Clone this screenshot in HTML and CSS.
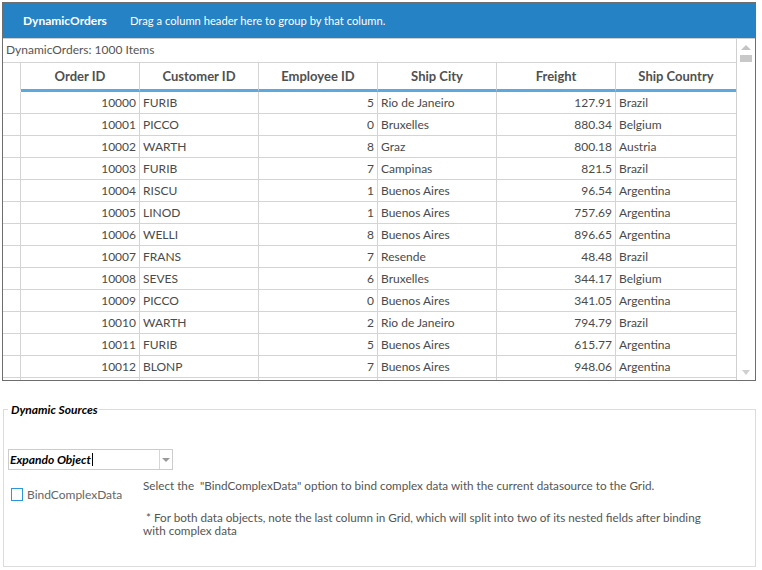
FILE: index.html
```html
<!DOCTYPE html>
<html>
<head>
<meta charset="utf-8">
<link rel="stylesheet" href="styles.css">
</head>
<body>
<div class="grid">
  <div class="group-bar">
    <span class="title">DynamicOrders</span>
    <span class="hint">Drag a column header here to group by that column.</span>
  </div>
  <div class="grid-body">
    <div class="main">
      <div class="caption">DynamicOrders: 1000 Items</div>
      <div class="row head">
        <div class="cell indent"></div>
        <div class="cell">Order ID</div>
        <div class="cell">Customer ID</div>
        <div class="cell">Employee ID</div>
        <div class="cell">Ship City</div>
        <div class="cell">Freight</div>
        <div class="cell last">Ship Country</div>
      </div>
      <div class="row"><div class="cell indent"></div><div class="cell num">10000</div><div class="cell">FURIB</div><div class="cell num">5</div><div class="cell">Rio de Janeiro</div><div class="cell num">127.91</div><div class="cell last">Brazil</div></div>
      <div class="row"><div class="cell indent"></div><div class="cell num">10001</div><div class="cell">PICCO</div><div class="cell num">0</div><div class="cell">Bruxelles</div><div class="cell num">880.34</div><div class="cell last">Belgium</div></div>
      <div class="row"><div class="cell indent"></div><div class="cell num">10002</div><div class="cell">WARTH</div><div class="cell num">8</div><div class="cell">Graz</div><div class="cell num">800.18</div><div class="cell last">Austria</div></div>
      <div class="row"><div class="cell indent"></div><div class="cell num">10003</div><div class="cell">FURIB</div><div class="cell num">7</div><div class="cell">Campinas</div><div class="cell num">821.5</div><div class="cell last">Brazil</div></div>
      <div class="row"><div class="cell indent"></div><div class="cell num">10004</div><div class="cell">RISCU</div><div class="cell num">1</div><div class="cell">Buenos Aires</div><div class="cell num">96.54</div><div class="cell last">Argentina</div></div>
      <div class="row"><div class="cell indent"></div><div class="cell num">10005</div><div class="cell">LINOD</div><div class="cell num">1</div><div class="cell">Buenos Aires</div><div class="cell num">757.69</div><div class="cell last">Argentina</div></div>
      <div class="row"><div class="cell indent"></div><div class="cell num">10006</div><div class="cell">WELLI</div><div class="cell num">8</div><div class="cell">Buenos Aires</div><div class="cell num">896.65</div><div class="cell last">Argentina</div></div>
      <div class="row"><div class="cell indent"></div><div class="cell num">10007</div><div class="cell">FRANS</div><div class="cell num">7</div><div class="cell">Resende</div><div class="cell num">48.48</div><div class="cell last">Brazil</div></div>
      <div class="row"><div class="cell indent"></div><div class="cell num">10008</div><div class="cell">SEVES</div><div class="cell num">6</div><div class="cell">Bruxelles</div><div class="cell num">344.17</div><div class="cell last">Belgium</div></div>
      <div class="row"><div class="cell indent"></div><div class="cell num">10009</div><div class="cell">PICCO</div><div class="cell num">0</div><div class="cell">Buenos Aires</div><div class="cell num">341.05</div><div class="cell last">Argentina</div></div>
      <div class="row"><div class="cell indent"></div><div class="cell num">10010</div><div class="cell">WARTH</div><div class="cell num">2</div><div class="cell">Rio de Janeiro</div><div class="cell num">794.79</div><div class="cell last">Brazil</div></div>
      <div class="row"><div class="cell indent"></div><div class="cell num">10011</div><div class="cell">FURIB</div><div class="cell num">5</div><div class="cell">Buenos Aires</div><div class="cell num">615.77</div><div class="cell last">Argentina</div></div>
      <div class="row"><div class="cell indent"></div><div class="cell num">10012</div><div class="cell">BLONP</div><div class="cell num">7</div><div class="cell">Buenos Aires</div><div class="cell num">948.06</div><div class="cell last">Argentina</div></div>
      <div class="row"><div class="cell indent"></div><div class="cell"></div><div class="cell"></div><div class="cell"></div><div class="cell"></div><div class="cell"></div><div class="cell last"></div></div>
    </div>
    <div class="vscroll">
      <span class="arrow up"></span>
      <span class="thumb"></span>
      <span class="spacer"></span>
      <span class="arrow down"></span>
    </div>
  </div>
</div>

<fieldset class="sources">
  <legend>Dynamic Sources</legend>
  <div class="combo">
    <span class="combo-text">Expando Object<span class="caret"></span></span>
    <span class="combo-btn"><span class="combo-arrow"></span></span>
  </div>
  <div class="options">
    <div class="check-col">
      <span class="checkbox"></span>
      <span class="check-label">BindComplexData</span>
    </div>
    <div class="text-col">
      <p class="desc">Select the &nbsp;"BindComplexData" option to bind complex data with the current datasource to the Grid.</p>
      <p class="note">&nbsp;* For both data objects, note the last column in Grid, which will split into two of its nested fields after binding with complex data</p>
    </div>
  </div>
</fieldset>
</body>
</html>
```

FILE: styles.css
```css
* { box-sizing: border-box; }
body {
  margin: 0;
  background: #ffffff;
  font-family: Lato, "Open Sans", sans-serif;
  font-size: 12px;
  color: #4a4a4a;
}
.grid {
  margin: 2px 0 0 2px;
  width: 754px;
  height: 379px;
  border: 1px solid #6e6e6e;
  display: flex;
  flex-direction: column;
  overflow: hidden;
}
.group-bar {
  height: 35px;
  flex: none;
  background: #2482c5;
  display: flex;
  align-items: center;
  color: #ffffff;
  padding-left: 20px;
}
.title {
  font-weight: 700;
  font-size: 12px;
}
.hint {
  margin-left: 23px;
  font-size: 11.2px;
}
.grid-body {
  flex: 1;
  min-height: 0;
  display: flex;
  border-top: 1px solid #d0d0d0;
}
.main {
  flex: 1;
  min-width: 0;
  overflow: hidden;
}
.caption {
  height: 24px;
  border-bottom: 1px solid #d4d4d4;
  padding-left: 3px;
  line-height: 22px;
  color: #555555;
}
.row {
  display: grid;
  grid-template-columns: 18px 119px 119px 119px 119px 119px 1fr;
}
.cell {
  height: 22px;
  line-height: 21px;
  border-right: 1px solid #d4d4d4;
  border-bottom: 1px solid #d4d4d4;
  padding: 0 3px;
  white-space: nowrap;
  overflow: hidden;
}
.cell.num { text-align: right; }
.cell.last { border-right: none; }
.head .cell {
  height: 29px;
  line-height: 27px;
  border-bottom: 3px solid #5ca9de;
  text-align: center;
  font-weight: 700;
  font-size: 13px;
  color: #505050;
}
.head .cell.indent {
  border-bottom: 3px solid #ffffff;
}
.vscroll {
  width: 19px;
  flex: none;
  border-left: 1px solid #d0d0d0;
  display: flex;
  flex-direction: column;
  align-items: center;
  padding: 6px 0 5px;
}
.arrow {
  width: 0;
  height: 0;
  border-left: 5px solid transparent;
  border-right: 5px solid transparent;
}
.arrow.up { border-bottom: 5px solid #c4c4c4; }
.arrow.down { border-top: 5px solid #d0d0d0; border-left-width: 4px; border-right-width: 4px; }
.thumb {
  width: 12px;
  height: 7px;
  background: #c8c8c8;
  margin-top: 5px;
}
.spacer { flex: 1; }

.sources {
  margin: 21px 0 0 3px;
  padding: 0 0 29px 4px;
  width: 753px;
  border: 1px solid #dcdcdc;
}
.sources legend {
  margin-left: 0;
  padding: 0 1px 0 3px;
  font-weight: 700;
  font-style: italic;
  color: #000000;
  font-size: 12px;
  line-height: 15px;
}
.combo {
  margin-top: 32px;
  width: 165px;
  height: 21px;
  border: 1px solid #cccccc;
  display: flex;
}
.combo-text {
  flex: 1;
  padding-left: 1px;
  font-weight: 700;
  font-style: italic;
  color: #000000;
  line-height: 19px;
  display: flex;
  align-items: center;
}
.caret {
  width: 1px;
  height: 13px;
  background: #000000;
  margin-left: 1px;
}
.combo-btn {
  width: 13px;
  border-left: 1px solid #d6d6d6;
  display: flex;
  align-items: center;
  justify-content: center;
}
.combo-arrow {
  width: 0;
  height: 0;
  border-left: 4px solid transparent;
  border-right: 4px solid transparent;
  border-top: 4px solid #9a9a9a;
}
.options {
  display: flex;
  margin-top: 9px;
}
.check-col {
  width: 135px;
  flex: none;
  display: flex;
  align-items: center;
  padding-top: 8px;
  align-self: flex-start;
  padding-left: 3px;
}
.checkbox {
  width: 12px;
  height: 13px;
  border: 1px solid #2c97dd;
  flex: none;
}
.check-label {
  margin-left: 4px;
  color: #666666;
  font-size: 12px;
}
.text-col {
  width: 582px;
  font-size: 11.7px;
  color: #555555;
}
.desc {
  margin: 0;
  line-height: 13px;
}
.note {
  margin: 19px 0 0 0;
  line-height: 13px;
}
```
